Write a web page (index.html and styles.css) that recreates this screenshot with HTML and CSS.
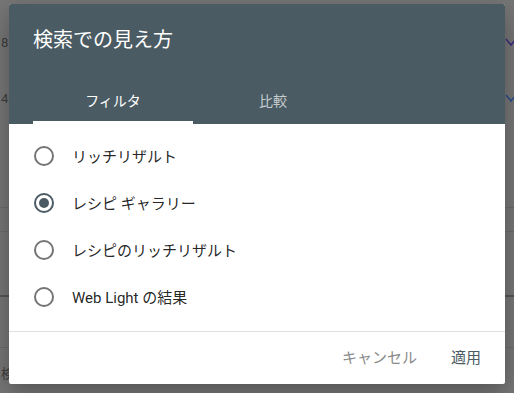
FILE: index.html
```html
<!DOCTYPE html>
<html lang="ja">
<head>
  <meta charset="UTF-8" />
  <meta name="viewport" content="width=device-width, initial-scale=1.0" />
  <title>検索での見え方</title>
  <link rel="stylesheet" href="styles.css">
</head>
<body>
  <div class="page">
    <div class="row row-top">
      <span class="axis">8</span>
      <svg class="chev" width="12" height="10" viewBox="0 0 12 10"><path d="M1 2 L6 8 L11 2" fill="none" stroke="#3a2a80" stroke-width="1.5"/></svg>
    </div>
    <div class="row row-two">
      <span class="axis">4</span>
      <svg class="chev" width="12" height="10" viewBox="0 0 12 10"><path d="M1 2 L6 8 L11 2" fill="none" stroke="#2a4a90" stroke-width="1.5"/></svg>
    </div>
    <div class="line"></div>
    <div class="line thin"></div>
    <div class="line thick"></div>
    <div class="line last"></div>
    <div class="row foot"><span class="axis">検</span></div>
  </div>

  <div class="overlay">
    <div class="dialog">
      <div class="dialog-head">
        <h2 class="dialog-title">検索での見え方</h2>
        <div class="tabs">
          <div class="tab active">フィルタ</div>
          <div class="tab">比較</div>
        </div>
      </div>
      <div class="dialog-body">
        <label class="option"><span class="radio"></span>リッチリザルト</label>
        <label class="option"><span class="radio checked"></span>レシピ ギャラリー</label>
        <label class="option"><span class="radio"></span>レシピのリッチリザルト</label>
        <label class="option"><span class="radio"></span>Web Light の結果</label>
      </div>
      <div class="dialog-foot">
        <button class="btn">キャンセル</button>
        <button class="btn primary">適用</button>
      </div>
    </div>
  </div>
</body>
</html>
```

FILE: styles.css
```css
body {
  margin: 0;
  width: 514px;
  height: 393px;
  overflow: hidden;
  background: #767676;
  font-family: Roboto, "Noto Sans CJK JP", sans-serif;
}
.page {
  position: relative;
  height: 393px;
  overflow: hidden;
}
.row {
  display: flex;
  justify-content: space-between;
  align-items: center;
  color: #3c3c3c;
  font-size: 13px;
}
.row-top {
  height: 28px;
  margin-top: 28px;
}
.row-two {
  height: 28px;
  margin-top: 28px;
}
.axis {
  margin-left: 1px;
}
.chev {
  margin-right: -3px;
}
.line {
  height: 0;
  border-top: 1px solid #6a6a6a;
  margin-top: 95px;
}
.line.thin {
  margin-top: 23px;
}
.line.thick {
  margin-top: 63px;
  border-top: 2px solid #555;
}
.line.last {
  margin-top: 50px;
}
.foot {
  height: 20px;
  margin-top: 14px;
}
.overlay {
  position: absolute;
  inset: 0;
  display: flex;
  justify-content: center;
  align-items: flex-start;
  padding-top: 4px;
}
.dialog {
  width: 496px;
  background: #fff;
  border-radius: 2px;
  overflow: hidden;
  box-shadow: 0 8px 24px rgba(0, 0, 0, 0.3);
}
.dialog-head {
  background: #4a5b63;
  padding: 24px 24px 0;
}
.dialog-title {
  margin: 0;
  font-size: 20px;
  line-height: 24px;
  font-weight: 400;
  color: #fff;
}
.tabs {
  display: flex;
  margin-top: 24px;
}
.tab {
  width: 160px;
  height: 48px;
  box-sizing: border-box;
  display: flex;
  align-items: center;
  justify-content: center;
  font-size: 14px;
  color: rgba(255, 255, 255, 0.7);
}
.tab.active {
  color: #fff;
  border-bottom: 3px solid #fff;
  padding-top: 3px;
}
.dialog-body {
  padding: 8px 0 11px;
  border-bottom: 1px solid #e0e0e0;
}
.option {
  height: 47px;
  display: flex;
  align-items: center;
  padding-left: 25px;
  font-size: 15px;
  color: rgba(0, 0, 0, 0.87);
}
.radio {
  width: 20px;
  height: 20px;
  box-sizing: border-box;
  border: 2px solid #757575;
  border-radius: 50%;
  margin-right: 18px;
  display: flex;
  align-items: center;
  justify-content: center;
}
.radio.checked {
  border-color: #4a5b63;
}
.radio.checked::after {
  content: "";
  width: 10px;
  height: 10px;
  border-radius: 50%;
  background: #4a5b63;
}
.dialog-foot {
  height: 52px;
  box-sizing: border-box;
  padding: 0 16px 4px 0;
  display: flex;
  justify-content: flex-end;
  align-items: center;
  gap: 18px;
}
.btn {
  background: none;
  border: none;
  padding: 8px;
  font-family: inherit;
  font-size: 15px;
  color: #8a8a8a;
}
.btn.primary {
  color: #4a5b63;
}
```
